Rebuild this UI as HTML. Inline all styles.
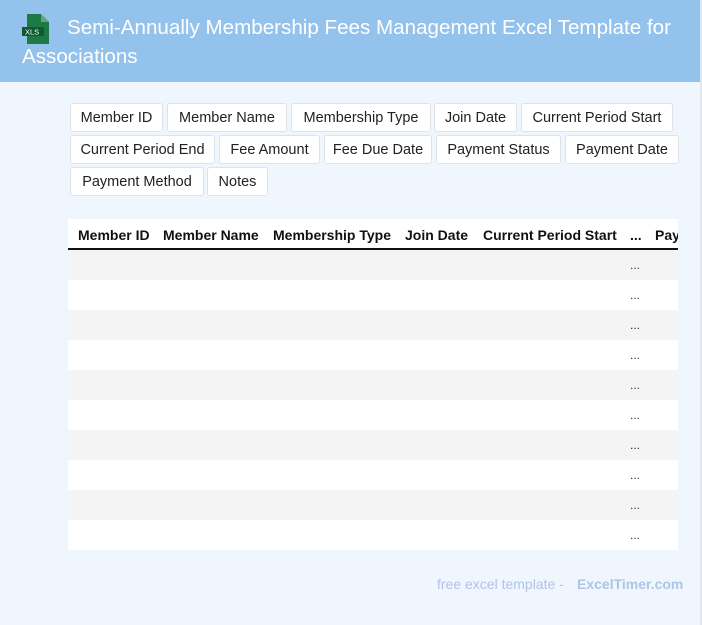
<!DOCTYPE html><html><head><style>
*{margin:0;padding:0;box-sizing:border-box}
body{width:702px;height:625px;background:#f0f6fe;font-family:"Liberation Sans",Arial,sans-serif;position:relative;overflow:hidden}
.hdr{position:absolute;left:0;top:0;width:702px;height:82px;background:#93c2ec}
.t{position:absolute;left:22px;top:13px;width:680px;color:#fff;font-size:20.6px;line-height:29px;text-indent:45px}
.tag{position:absolute;height:29px;background:#fff;border:1px solid #dfe3e8;border-radius:3px;font-size:14.5px;display:flex;align-items:center;justify-content:center;color:#222;padding-top:1px}
.tbl{position:absolute;left:68px;top:219px;width:610px;height:331px;background:#fff;overflow:hidden}
.th{position:absolute;top:0;height:31px;border-bottom:2px solid #111;width:610px}
.th span{position:absolute;top:8px;font-weight:bold;font-size:14px;color:#111;white-space:nowrap}
.r{position:absolute;left:0;width:610px;height:30px}
.r span{position:absolute;left:562px;top:8px;font-size:12px;color:#333}
.f{position:absolute;top:576px;font-size:14px;color:#b0c4e4}
</style></head><body>
<div class="hdr"></div>
<div style="position:absolute;right:0;top:0;width:2px;height:625px;background:#dfe6ee"></div>
<svg style="position:absolute;left:22px;top:14px" width="29" height="30" viewBox="0 0 29 30"><path d="M5 0h14l8 8v22H5z" fill="#1e7a45"/><path d="M19 0v8h8z" fill="#5fa77a"/><rect x="0" y="13" width="22" height="9" fill="#0f5a30"/><text x="3" y="20.5" font-size="7.5" fill="#fff" font-family="Liberation Sans">XLS</text></svg>
<div class="t">Semi-Annually Membership Fees Management Excel Template for Associations</div>
<div class="tag" style="left:70px;top:103px;width:93px">Member ID</div>
<div class="tag" style="left:167px;top:103px;width:120px">Member Name</div>
<div class="tag" style="left:291px;top:103px;width:140px">Membership Type</div>
<div class="tag" style="left:434px;top:103px;width:83px">Join Date</div>
<div class="tag" style="left:521px;top:103px;width:152px">Current Period Start</div>
<div class="tag" style="left:70px;top:135px;width:145px">Current Period End</div>
<div class="tag" style="left:219px;top:135px;width:101px">Fee Amount</div>
<div class="tag" style="left:324px;top:135px;width:108px">Fee Due Date</div>
<div class="tag" style="left:436px;top:135px;width:125px">Payment Status</div>
<div class="tag" style="left:565px;top:135px;width:114px">Payment Date</div>
<div class="tag" style="left:70px;top:167px;width:134px">Payment Method</div>
<div class="tag" style="left:207px;top:167px;width:61px">Notes</div>
<div class="tbl">
<div class="th"><span style="left:10px">Member ID</span><span style="left:95px">Member Name</span><span style="left:205px">Membership Type</span><span style="left:337px">Join Date</span><span style="left:415px">Current Period Start</span><span style="left:562px">...</span><span style="left:587px">Payment</span></div>
<div class="r" style="top:31px;background:#f4f4f4"><span>...</span></div>
<div class="r" style="top:61px"><span>...</span></div>
<div class="r" style="top:91px;background:#f4f4f4"><span>...</span></div>
<div class="r" style="top:121px"><span>...</span></div>
<div class="r" style="top:151px;background:#f4f4f4"><span>...</span></div>
<div class="r" style="top:181px"><span>...</span></div>
<div class="r" style="top:211px;background:#f4f4f4"><span>...</span></div>
<div class="r" style="top:241px"><span>...</span></div>
<div class="r" style="top:271px;background:#f4f4f4"><span>...</span></div>
<div class="r" style="top:301px"><span>...</span></div>
</div>
<div class="f" style="left:437px">free excel template -</div>
<div class="f" style="left:577px;font-weight:bold">ExcelTimer.com</div>
</body></html>
